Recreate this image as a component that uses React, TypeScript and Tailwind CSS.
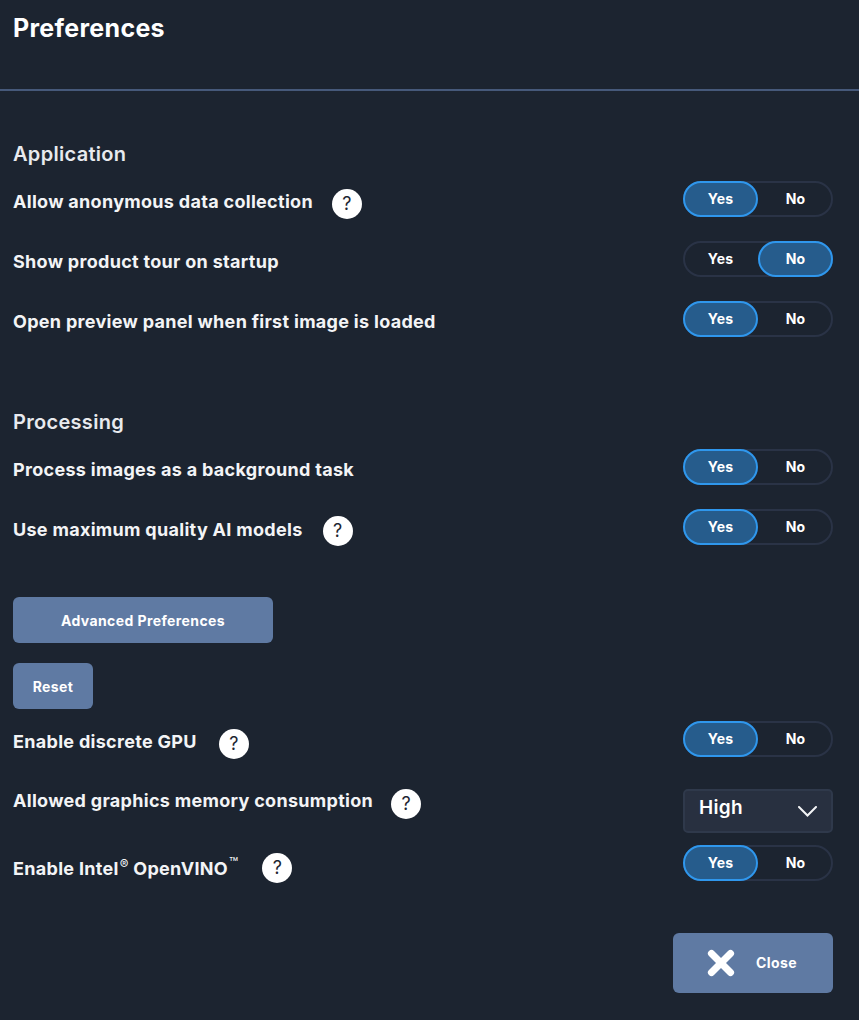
import { X } from 'lucide-react';

const font = "font-['Inter','Liberation_Sans',sans-serif]";

const HelpIcon = ({ className = 'mt-2' }: { className?: string }) => (
  <span
    className={`${className} flex h-[30px] w-[30px] shrink-0 items-center justify-center rounded-full bg-white pb-[2px] text-[18px] font-normal tracking-normal text-[#1d2531]`}
  >
    ?
  </span>
);

const Toggle = ({ value }: { value: 'Yes' | 'No' }) => (
  <div className="flex h-9 w-[150px] shrink-0 rounded-full border-2 border-[#2a3346] text-sm font-bold tracking-[0.2px] text-white">
    {value === 'Yes' ? (
      <>
        <span className="-my-[2px] -ml-[2px] flex h-9 w-[75px] items-center justify-center rounded-full border-2 border-[#2f97ed] bg-[#265c8c] pb-[1px]">
          Yes
        </span>
        <span className="flex h-8 w-[73px] items-center justify-center pb-[1px] pl-[2px]">No</span>
      </>
    ) : (
      <>
        <span className="flex h-8 w-[73px] items-center justify-center pr-[2px] pb-[1px]">Yes</span>
        <span className="-my-[2px] -mr-[2px] flex h-9 w-[75px] items-center justify-center rounded-full border-2 border-[#2f97ed] bg-[#265c8c] pb-[1px]">
          No
        </span>
      </>
    )}
  </div>
);

const Row = ({
  label,
  help,
  labelClass = 'pt-[7px]',
  helpClass,
  gap = 'gap-5',
  children,
}: {
  label: React.ReactNode;
  help?: boolean;
  labelClass?: string;
  helpClass?: string;
  gap?: string;
  children: React.ReactNode;
}) => (
  <div className="flex h-9 items-start justify-between">
    <div className={`flex items-start ${gap}`}>
      <span className={`${labelClass} text-[18px] leading-[28px] font-bold text-[#f3f4f6]`}>{label}</span>
      {help && <HelpIcon className={helpClass} />}
    </div>
    {children}
  </div>
);

const App = () => (
  <div className={`${font} h-[1020px] w-[859px] overflow-hidden bg-[#1c2430] tracking-[0.3px]`}>
    <h1 className="h-[89px] px-[13px] pt-[10px] text-[25px] leading-9 font-bold text-white">Preferences</h1>
    <div className="h-[2px] bg-[#46597a]" />

    <div className="pr-[26px] pl-[13px]">
      <h2 className="mt-[49px] text-[20px] leading-7 font-semibold text-[#e8eaee]">Application</h2>
      <div className="mt-[13px] flex flex-col gap-6">
        <Row label="Allow anonymous data collection" help gap="gap-[19px]">
          <Toggle value="Yes" />
        </Row>
        <Row label="Show product tour on startup">
          <Toggle value="No" />
        </Row>
        <Row label="Open preview panel when first image is loaded">
          <Toggle value="Yes" />
        </Row>
      </div>

      <h2 className="mt-[71px] text-[20px] leading-7 font-semibold text-[#e8eaee]">Processing</h2>
      <div className="mt-[13px] flex flex-col gap-6">
        <Row label="Process images as a background task">
          <Toggle value="Yes" />
        </Row>
        <Row label="Use maximum quality AI models" help helpClass="mt-[7px]">
          <Toggle value="Yes" />
        </Row>
      </div>

      <button className="mt-[52px] block h-[46px] w-[260px] rounded-md bg-[#5f7aa3] text-sm font-bold tracking-[0.4px] text-white">
        <span className="relative top-px">Advanced Preferences</span>
      </button>
      <button className="mt-5 block h-[46px] w-20 rounded-md bg-[#5f7aa3] text-sm font-bold tracking-[0.4px] text-white">
        <span className="relative top-px">Reset</span>
      </button>

      <div className="mt-3">
        <Row label="Enable discrete GPU" help gap="gap-[22px]">
          <Toggle value="Yes" />
        </Row>
      </div>
      <div className="mt-8 flex h-11 items-start justify-between">
        <div className="flex items-start gap-[18px]">
          <span className="text-[18px] leading-[24px] font-bold text-[#f3f4f6]">Allowed graphics memory consumption</span>
          <HelpIcon className="mt-0" />
        </div>
        <div className="flex h-11 w-[150px] items-center justify-between rounded-[5px] border-2 border-[#2f394b] bg-[#283040] pr-[14px] pl-[14px] text-[19px] font-semibold text-white">
          <span className="pb-[6px]">High</span>
          <svg width="19" height="11" viewBox="0 0 19 11" fill="none" stroke="#f3f4f6" strokeWidth="2" strokeLinecap="round">
            <path d="M1 1l8.5 8.5L18 1" />
          </svg>
        </div>
      </div>
      <div className="mt-3">
        <Row
          label={
            <>
              Enable Intel<sup className="ml-px text-[13px] font-normal">®</sup> OpenVINO
              <sup className="ml-px text-[15px] font-normal">™</sup>
            </>
          }
          labelClass="pt-[10px]"
          gap="gap-6"
          help
        >
          <Toggle value="Yes" />
        </Row>
      </div>

      <div className="mt-[52px] flex justify-end">
        <button className="flex h-[60px] w-40 items-center rounded-md bg-[#5f7aa3] pl-[30px] text-sm font-bold tracking-[0.4px] text-white">
          <X size={38} strokeWidth={4.5} className="mr-4 -ml-px" />
          Close
        </button>
      </div>
    </div>
  </div>
);

export default App;
